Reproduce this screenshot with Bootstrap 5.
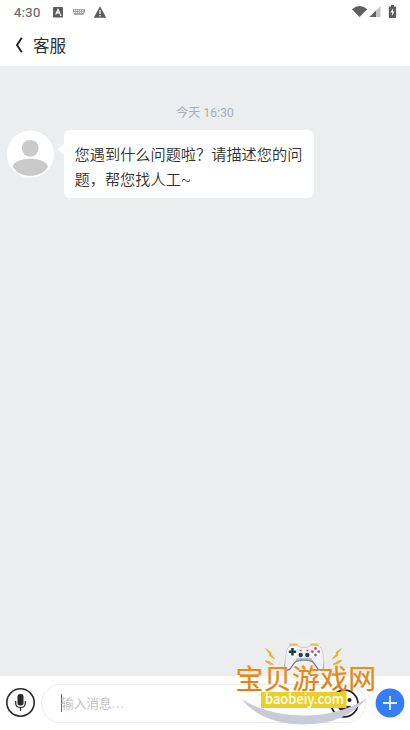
<!DOCTYPE html>
<html lang="zh-CN">
<head>
    <meta charset="UTF-8">
    <meta name="viewport" content="width=device-width, initial-scale=1.0">
    <title>客服</title>
    <link href="https://cdn.jsdelivr.net/npm/bootstrap@5.3.0/dist/css/bootstrap.min.css" rel="stylesheet">
    <style>
        body {
            font-family: Roboto, "Noto Sans CJK SC", sans-serif;
            background: #ebedef;
            color: #303030;
            height: 730px;
            overflow: hidden;
        }
        svg { display: block; flex: none; }

        /* Barra de estado y título */
        .status-bar { height: 24px; padding: 0 12px 0 14px; color: #666; }
        .clock { font-size: 13px; line-height: 24px; width: 38px; padding-top: 1px; letter-spacing: .45px; -webkit-text-stroke: .2px #666; }
        .title-bar { height: 42px; padding-left: 14px; }
        .title-text { font-size: 16.6px; line-height: 42px; margin-left: 8px; padding-top: 3px; }

        /* Conversación */
        .chat-date { font-size: 12px; line-height: 18px; color: #a8afb4; margin-top: 38px; letter-spacing: .1px; }
        .chat-row { margin-top: 8px; padding-left: 6px; }
        .bubble {
            width: 250px;
            height: 68px;
            padding: 13px 0 0 10.5px;
            border-radius: 6px;
            font-size: 15.2px;
            font-weight: 350;
            line-height: 25px;
            white-space: nowrap;
        }

        /* Barra de entrada */
        .input-bar { height: 54px; padding: 0 5px 1px; }
        .msg-box {
            width: 325px;
            height: 39px;
            margin: 2px 0 0 5px;
            padding: 0 6px 1px 19px;
            border: 1px solid #ececec;
            border-radius: 20px;
            font-size: 12.7px;
            color: #c2c2c2;
        }
        .msg-hint { margin-left: -1px; padding-top: 1px; }
        .hint-dots { letter-spacing: .9px; }
        .caret { width: 1px; height: 18px; background: #666; }
        .add-btn { margin-left: 8.5px; }

        /* Marca sobre la página */
        .brand { left: 232px; top: 633px; pointer-events: none; }
    </style>
</head>
<body class="d-flex flex-column position-relative">
    <header class="bg-white">
        <div class="status-bar d-flex align-items-center">
            <span class="clock">4:30</span>
            <svg width="56" height="14" viewBox="0 0 56 14">
                <rect x="1" y="2" width="10" height="10.500" rx="1" fill="#5c5c5c"/>
                <path d="M3.700 9.500 6 4.500l2.300 5M4.600 7.800h2.800M8 10.300h1.500" fill="none" stroke="#fff" stroke-width="1.200"/>
                <path d="M21 4h12v3l-1.500 3h-9L21 7z" fill="#aaa"/>
                <path d="M22 5.500h10M22 7.500h10" stroke="#eee" stroke-dasharray="1 1"/>
                <path d="M48 1.200 54.300 12.800H41.700z" fill="#5c5c5c"/>
                <path d="M48 5v4M48 10v1.400" stroke="#fff" stroke-width="1.200"/>
            </svg>
            <svg class="ms-auto" width="48" height="16" viewBox="0 0 48 16">
                <path d="M2 5.200Q9.500-1 17.300 5.200L9.600 13z" fill="#606060"/>
                <path d="M30.500 2v11H19.500z" fill="#c4c4c4"/>
                <path d="M26 6.500V13H19.500z" fill="#606060"/>
                <path d="M41 1h3v1.500h2V14h-7.200V2.500H41z" fill="#5c5c5c"/>
                <path d="m43.200 4.300-3 4.300h2l-.4 3.400 3-4.500h-2z" fill="#fff"/>
            </svg>
        </div>
        <div class="title-bar d-flex align-items-center">
            <svg width="11" height="18" viewBox="0 0 11 18"><path d="M7.800 1.700 3 9l4.800 7.300" fill="none" stroke="#222" stroke-width="1.900"/></svg>
            <span class="title-text">客服</span>
        </div>
    </header>

    <main class="flex-grow-1">
        <div class="chat-date text-center">今天 16:30</div>
        <div class="chat-row d-flex">
            <svg width="49" height="49" viewBox="0 0 49 49">
                <circle cx="24.400" cy="24.200" r="23.600" fill="#fff"/>
                <circle cx="24.200" cy="18.300" r="8.400" fill="#cacaca"/>
                <path d="M6.700 37C8 31.500 15 28.800 24.300 28.800S40.700 31.500 42 37C38 42.500 32 45.800 24.300 45.800S10.700 42.500 6.700 37z" fill="#cacaca"/>
            </svg>
            <svg width="9" height="40" viewBox="0 0 9 40"><path d="M10 12.500 3.500 18.300q-1 1 0 2L10 26z" fill="#fff"/></svg>
            <div class="bubble bg-white">您遇到什么问题啦？请描述您的问<br>题，帮您找人工~</div>
        </div>
    </main>

    <footer class="input-bar bg-white d-flex align-items-center">
        <svg width="31" height="31" viewBox="0 0 31 31">
            <circle cx="15.500" cy="15.500" r="13.700" fill="none" stroke="#292929" stroke-width="1.600"/>
            <rect x="12.500" y="7" width="6" height="11.600" rx="2.400" fill="#292929"/>
            <path d="M10.700 14v2.300q0 4.200 4.800 4.200t4.800-4.200V14M15.500 20.500V24" fill="none" stroke="#292929" stroke-width="1.200"/>
        </svg>
        <div class="msg-box d-flex align-items-center">
            <span class="caret"></span><span class="msg-hint">输入消息<span class="hint-dots">...</span></span>
            <svg class="ms-auto" width="29" height="29" viewBox="0 0 29 29">
                <circle cx="14.500" cy="14.500" r="13.400" fill="none" stroke="#222" stroke-width="1.700"/>
                <circle cx="9.500" cy="11" r="2" fill="#222"/>
                <circle cx="19.500" cy="11" r="2" fill="#222"/>
                <path d="M7.500 17h13.500q-1.500 5.500-6.700 5.500T7.500 17z" fill="#222"/>
            </svg>
        </div>
        <svg class="add-btn" width="30" height="30" viewBox="0 0 30 30">
            <circle cx="15" cy="15" r="14.400" fill="#367dfb"/>
            <path d="M15 8v14M8 15h14" stroke="#e6efff" stroke-width="1.800"/>
        </svg>
    </footer>

    <!-- Logotipo: mando, nombre del sitio y sonrisa -->
    <svg class="brand position-absolute" width="150" height="97" viewBox="232 633 150 97">
        <defs>
            <linearGradient id="gold" x1="0" y1="0" x2="0" y2="1">
                <stop offset="0" stop-color="#ef9614"/>
                <stop offset="1" stop-color="#d97a18"/>
            </linearGradient>
        </defs>
        <circle cx="304" cy="660" r="22" fill="#f2f1ed" opacity=".6"/>
        <path d="M241 699Q268 715.500 304 715.500T367 698Q345 724.500 304 724.500T241 699z" fill="#c9cbd8"/>
        <path d="M290.500 646v-1.500h6v1.500M311.500 646v-1.500h6v1.500" fill="none" stroke="#e9bd55" stroke-width="2"/>
        <path d="M291 645.500h6q2 2 7 2t7-2h7q4 1 5 8l1 12q0 5-3 5-3 0-6-6l-4-6H298l-5 7q-3 6-6 5-3-1-2-6l1-11q1-7 5-8z" fill="#f0f1f6" stroke="#b9bccb" stroke-width=".7"/>
        <path d="M285 658q-1 12 3 11 3-1 9-11h14q6 9 8 11 5 4 4-9l1 6q0 6-4 5-3-1-9-10-7-3-14 0-6 7-8 9-5 2-5-5z" fill="#b4b7c6"/>
        <path d="M287 670q3 1 5-4l3-4q9-4 18 0l3 4q2 5 5 4" fill="none" stroke="#666c82" stroke-width="1"/>
        <circle cx="292.500" cy="651.700" r="5" fill="#fff"/>
        <path d="M292.500 648v7.400M288.800 651.700h7.400" stroke="#173f4b" stroke-width="2.600"/>
        <circle cx="315.500" cy="651.700" r="5.300" fill="#fff"/>
        <circle cx="315.500" cy="648.500" r="1.400" fill="#e04650"/>
        <circle cx="315.500" cy="655" r="1.400" fill="#168b9b"/>
        <circle cx="312.300" cy="651.700" r="1.400" fill="#e04650"/>
        <circle cx="318.700" cy="651.700" r="1.400" fill="#e04650"/>
        <circle cx="300.700" cy="655" r="2.200" fill="#263e50"/>
        <circle cx="307.300" cy="655" r="2.200" fill="#263e50"/>
        <path d="M299.500 650.500h2M306.500 650.500h2" stroke="#e04650" stroke-width="1.300"/>
        <path d="m265.500 648.500 5.500 4v2l3.500 4.500-5-3.500v-2zM265 661l4 .5 1.500 1.200 3 1.800-4.500-.5-1-1z" fill="#f2b51e" stroke="#eaa91c" stroke-width=".8"/>
        <path d="m341.500 648.500-5.500 4v2l-3.500 4.500 5-3.500v-2zM342 660.500l-4 .5-1.500 1.200-3.500 2.300 5-.8 1-1z" fill="#f2b51e" stroke="#eaa91c" stroke-width=".8"/>
        <text x="235.500" y="688.800" font-family="'Noto Sans CJK SC', sans-serif" font-size="27.800" letter-spacing=".4" fill="url(#gold)" stroke="#e28718" stroke-width=".2">宝贝游戏网</text>
        <rect x="261" y="692" width="85.500" height="16" fill="#ebcf27"/>
        <text x="265" y="704.300" font-family="'Noto Sans CJK SC', sans-serif" font-size="14" font-weight="500" textLength="79" lengthAdjust="spacingAndGlyphs" fill="#fff">baobeiy.com</text>
    </svg>

    <script src="https://cdn.jsdelivr.net/npm/bootstrap@5.3.0/dist/js/bootstrap.bundle.min.js"></script>
</body>
</html>
